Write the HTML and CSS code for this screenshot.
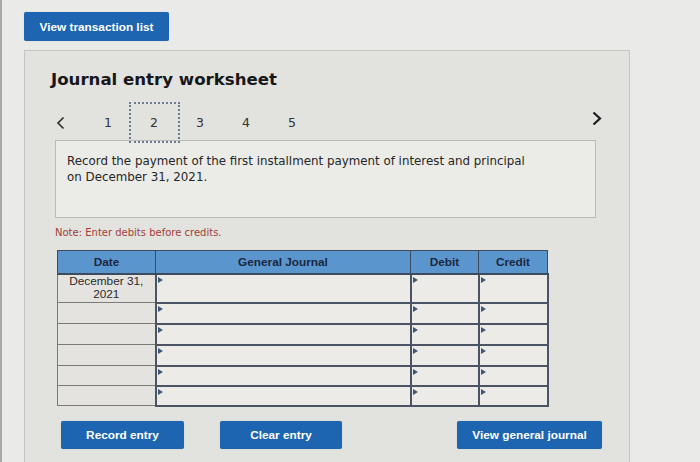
FILE: index.html
```html
<!DOCTYPE html>
<html lang="en">
<head>
<meta charset="utf-8">
<title>Journal entry worksheet</title>
<link rel="stylesheet" href="styles.css">
</head>
<body>
<div class="page">
  <div class="topbar">
    <button class="btn btn-top">View transaction list</button>
  </div>
  <section class="panel">
    <h1 class="title">Journal entry worksheet</h1>
    <nav class="steps">
      <span class="chev chev-prev">
        <svg width="10" height="14" viewBox="0 0 10 14"><polyline points="7.5,1.5 2,7 7.5,12.5" fill="none" stroke="#2b2b2b" stroke-width="1.6"/></svg>
      </span>
      <span class="step">1</span>
      <span class="step step-active">2</span>
      <span class="step">3</span>
      <span class="step">4</span>
      <span class="step">5</span>
      <span class="chev chev-next">
        <svg width="12" height="15" viewBox="0 0 12 15"><polyline points="2.5,1.5 9,7.5 2.5,13.5" fill="none" stroke="#1e1e1e" stroke-width="2.2"/></svg>
      </span>
    </nav>
    <div class="task">Record the payment of the first installment payment of interest and principal<br>on December 31, 2021.</div>
    <p class="note">Note: Enter debits before credits.</p>
    <table class="journal">
      <colgroup>
        <col class="c-date"><col class="c-gj"><col class="c-dr"><col class="c-cr">
      </colgroup>
      <thead>
        <tr><th>Date</th><th>General Journal</th><th>Debit</th><th>Credit</th></tr>
      </thead>
      <tbody>
        <tr class="r-first"><td class="date">December 31,<br>2021</td><td class="in"></td><td class="in"></td><td class="in"></td></tr>
        <tr class="r21"><td class="date"></td><td class="in"></td><td class="in"></td><td class="in"></td></tr>
        <tr class="r21"><td class="date"></td><td class="in"></td><td class="in"></td><td class="in"></td></tr>
        <tr class="r21"><td class="date"></td><td class="in"></td><td class="in"></td><td class="in"></td></tr>
        <tr class="r20"><td class="date"></td><td class="in"></td><td class="in"></td><td class="in"></td></tr>
        <tr class="r20"><td class="date"></td><td class="in"></td><td class="in"></td><td class="in"></td></tr>
      </tbody>
    </table>
    <div class="actions">
      <button class="btn btn-record">Record entry</button>
      <button class="btn btn-clear">Clear entry</button>
      <button class="btn btn-view">View general journal</button>
    </div>
  </section>
</div>
</body>
</html>
```

FILE: styles.css
```css
* { box-sizing: border-box; }
html, body { margin: 0; padding: 0; }
body {
  width: 700px;
  height: 462px;
  overflow: hidden;
  background: #eaeae8;
  font-family: "DejaVu Sans", Verdana, sans-serif;
  color: #2a2a2a;
}
.page {
  height: 462px;
  border-left: 2px solid #a9a9a6;
  padding-top: 12px;
}
.topbar { padding-left: 22px; }
.btn {
  display: inline-flex;
  align-items: center;
  justify-content: center;
  border: 0;
  border-radius: 2px;
  background: #1d65b0;
  color: #fff;
  font-family: "Liberation Sans", Arial, sans-serif;
  font-weight: bold;
  font-size: 11.8px;
  padding: 0;
  margin: 0;
  box-shadow: 0 0 1px rgba(0,0,0,0.25);
}
.btn-top { width: 145px; height: 29px; font-size: 11.8px; }

.panel {
  margin: 9px 0 0 22px;
  width: 606px;
  height: 430px;
  border: 1px solid #c4c4c1;
  border-bottom: 0;
  background: #e2e2df;
  padding: 19px 0 0 30px;
}
.title {
  margin: 0 0 0 -4px;
  font-size: 16.6px;
  line-height: 20px;
  font-weight: bold;
  color: #171717;
}
.steps {
  display: flex;
  align-items: center;
  height: 41px;
  margin: 12px 26px -3px 0;
  position: relative;
  z-index: 1;
}
.chev { display: flex; align-items: center; }
.chev-prev { width: 12px; margin-right: 18px; padding-left: 1px; padding-top: 1px; }
.chev-next { margin-left: auto; margin-top: -9px; }
.step {
  width: 46px;
  text-align: center;
  font-size: 12.5px;
  color: #333;
  padding-bottom: 1px;
}
.step-active {
  width: 51px;
  height: 41px;
  margin: 0 -2.5px;
  border: 2px dotted #6d7c95;
  display: flex;
  align-items: center;
  justify-content: center;
  padding-top: 0;
  padding-bottom: 0;
}
.task {
  width: 541px;
  height: 78px;
  border: 1px solid #b9b9b6;
  background: #ebebe8;
  padding: 12px 0 0 11px;
  font-size: 11.85px;
  line-height: 16px;
  color: #262626;
}
.note {
  margin: 9px 0 0 0;
  font-size: 10px;
  line-height: 12px;
  color: #a1403a;
}
.journal {
  margin: 11px 0 0 2px;
  border-collapse: collapse;
  table-layout: fixed;
  width: 490px;
  font-family: "Liberation Sans", Arial, sans-serif;
}
.c-date { width: 98px; }
.c-gj { width: 255px; }
.c-dr { width: 68px; }
.c-cr { width: 69px; }
.journal th {
  height: 23px;
  padding: 0;
  background: #5b95ce;
  color: #1a2740;
  font-size: 11.8px;
  font-weight: bold;
  border: 1px solid #3e4b5e;
  border-bottom: 2px solid #3e4b5e;
}
.journal td {
  padding: 0;
  background: #e4e3e0;
}
.journal td.date {
  border: 1px solid #7a7a78;
  text-align: center;
  font-size: 11.8px;
  line-height: 13px;
  color: #2b2b2b;
  vertical-align: middle;
}
.journal td.in {
  border: 2px solid #4a5465;
  background: #ecebe8;
  position: relative;
}
.journal td.in::before {
  content: "";
  position: absolute;
  left: 1px;
  top: 2px;
  border-left: 5px solid #3c5778;
  border-top: 3px solid transparent;
  border-bottom: 3px solid transparent;
}
.r-first td { height: 29px; }
.r21 td { height: 21px; }
.r20 td { height: 20px; }

.actions {
  display: flex;
  margin: 14px 0 0 6px;
}
.actions .btn { height: 28px; }
.btn-record { width: 123px; }
.btn-clear { width: 122px; margin-left: 36px; }
.btn-view { width: 145px; margin-left: 115px; }
```
